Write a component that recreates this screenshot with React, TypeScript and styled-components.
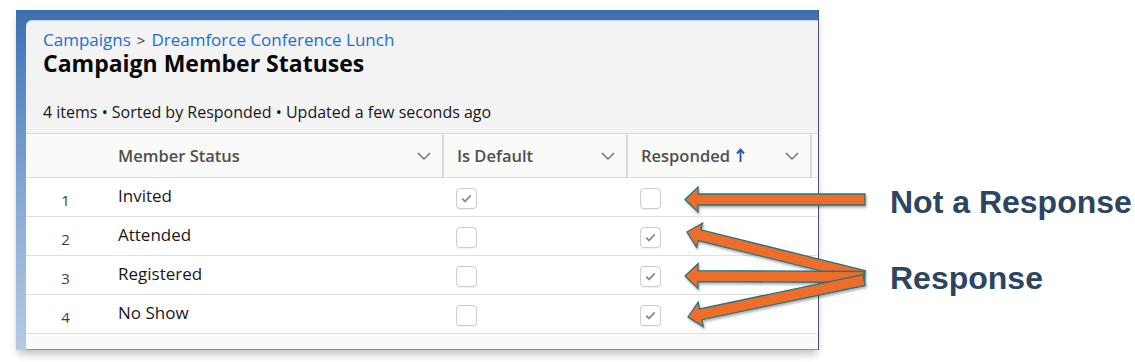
import React from 'react'
import styled, { createGlobalStyle } from 'styled-components'

const GlobalStyle = createGlobalStyle`
  body {
    margin: 0;
    background: #ffffff;
    font-family: "Open Sans", "Noto Sans", sans-serif;
  }
`

interface Row {
  num: number
  status: string
  isDefault: boolean
  responded: boolean
}

const rows: Row[] = [
  { num: 1, status: 'Invited', isDefault: true, responded: false },
  { num: 2, status: 'Attended', isDefault: false, responded: true },
  { num: 3, status: 'Registered', isDefault: false, responded: true },
  { num: 4, status: 'No Show', isDefault: false, responded: true },
]

type Pt = [number, number]

function arrowPoints(tail: Pt, tip: Pt, w = 5.5, h = 12.5, len = 13) {
  const dx = tip[0] - tail[0]
  const dy = tip[1] - tail[1]
  const d = Math.hypot(dx, dy)
  const ux = dx / d
  const uy = dy / d
  const nx = -uy
  const ny = ux
  const bx = tip[0] - ux * len
  const by = tip[1] - uy * len
  const pts: Pt[] = [
    [tail[0] + nx * w, tail[1] + ny * w],
    [bx + nx * w, by + ny * w],
    [bx + nx * h, by + ny * h],
    tip,
    [bx - nx * h, by - ny * h],
    [bx - nx * w, by - ny * w],
    [tail[0] - nx * w, tail[1] - ny * w],
  ]
  return pts.map((p) => p.map((v) => v.toFixed(1)).join(',')).join(' ')
}

const arrows: [Pt, Pt][] = [
  [[865, 199.5], [685, 199.5]],
  [[864, 276], [687, 232]],
  [[864, 277], [685, 276]],
  [[864, 280], [688, 317]],
]

function Chevron() {
  return (
    <svg width="14" height="8" viewBox="0 0 14 8">
      <path d="M1 1l6 6 6-6" fill="none" stroke="#706e6b" strokeWidth="1.4" />
    </svg>
  )
}

function SortArrow() {
  return (
    <svg width="9" height="15" viewBox="0 0 9 15">
      <path d="M4.5 14V2M1 5.5l3.5-4 3.5 4" fill="none" stroke="#2a5aa8" strokeWidth="1.9" />
    </svg>
  )
}

function Check() {
  return (
    <svg width="11" height="9" viewBox="0 0 11 9">
      <path d="M1.2 4.6l2.8 2.8 5.8-6" fill="none" stroke="#8c8b89" strokeWidth="1.8" />
    </svg>
  )
}

export default function App() {
  return (
    <>
      <GlobalStyle />
      <Page>
        <Frame>
          <Card>
            <PageHeader>
              <Breadcrumb>
                <Crumb>Campaigns</Crumb>
                <Sep>&gt;</Sep>
                <Crumb>Dreamforce Conference Lunch</Crumb>
              </Breadcrumb>
              <Title>Campaign Member Statuses</Title>
              <Meta>4 items • Sorted by Responded • Updated a few seconds ago</Meta>
            </PageHeader>
            <Table>
              <HeadRow>
                <HeadCell />
                <HeadCell divider>
                  <HeadLabel>Member Status</HeadLabel>
                  <Chevron />
                </HeadCell>
                <HeadCell divider>
                  <HeadLabel>Is Default</HeadLabel>
                  <Chevron />
                </HeadCell>
                <HeadCell divider>
                  <HeadLabel>
                    Responded <SortArrow />
                  </HeadLabel>
                  <Chevron />
                </HeadCell>
                <HeadCell />
              </HeadRow>
              {rows.map((r) => (
                <BodyRow key={r.num}>
                  <NumCell>{r.num}</NumCell>
                  <TextCell>{r.status}</TextCell>
                  <BoxCell>
                    <CheckBox>{r.isDefault && <Check />}</CheckBox>
                  </BoxCell>
                  <BoxCell>
                    <CheckBox>{r.responded && <Check />}</CheckBox>
                  </BoxCell>
                  <BoxCell />
                </BodyRow>
              ))}
              <FootRow />
            </Table>
          </Card>
        </Frame>
        <Notes>
          <Note top={174}>Not a Response</Note>
          <Note top={40}>Response</Note>
        </Notes>
        <Overlay width="1135" height="362" viewBox="0 0 1135 362">
          <defs>
            <filter id="shadow" x="-10%" y="-50%" width="120%" height="200%">
              <feDropShadow dx="1" dy="2" stdDeviation="1.2" floodColor="#000" floodOpacity="0.3" />
            </filter>
          </defs>
          {arrows.map(([tail, tip], i) => (
            <polygon
              key={i}
              points={arrowPoints(tail, tip)}
              fill="#ef6d2b"
              stroke="#23757e"
              strokeWidth="1.3"
              strokeLinejoin="miter"
              filter="url(#shadow)"
            />
          ))}
        </Overlay>
      </Page>
    </>
  )
}

const Page = styled.div`
  position: relative;
  display: flex;
  width: 1135px;
  height: 362px;
  padding: 10px 0 0 16px;
  box-sizing: border-box;
`

const Frame = styled.div`
  width: 803px;
  height: 340px;
  box-sizing: border-box;
  padding: 10px 0 0 10px;
  background: linear-gradient(180deg, #3d6fae 0px, #5383c0 60px, #8cacd6 200px, #b4cae6 340px);
  border-right: 1px solid #44546f;
  box-shadow: 0 6px 8px -2px rgba(0, 0, 0, 0.25);
  display: flex;
`

const Card = styled.div`
  flex: 1;
  background: #f3f3f3;
  border-top-left-radius: 6px;
  border-top: 1px solid #c9d6e6;
  border-bottom: 1px solid #8e939b;
  display: flex;
  flex-direction: column;
  overflow: hidden;
`

const PageHeader = styled.div`
  padding: 8px 17px 0;
  height: 112px;
  box-sizing: border-box;
`

const Breadcrumb = styled.div`
  display: flex;
  align-items: baseline;
  gap: 6px;
  font-size: 17px;
  line-height: 22px;
`

const Crumb = styled.span`
  color: #1b6fcf;
`

const Sep = styled.span`
  color: #3e3e3c;
  font-size: 15px;
`

const Title = styled.div`
  font-size: 23px;
  font-weight: 700;
  line-height: 24px;
  color: #080707;
`

const Meta = styled.div`
  margin-top: 27px;
  font-size: 16px;
  line-height: 20px;
  color: #181818;
`

const Table = styled.div`
  display: flex;
  flex-direction: column;
  flex: 1;
  border-top: 1px solid #dddbda;
`

const columns = '79px 339px 184px 184px 1fr'

const HeadRow = styled.div`
  display: grid;
  grid-template-columns: ${columns};
  height: 43px;
  background: #fafaf9;
  border-bottom: 1px solid #dddbda;
`

const HeadCell = styled.div<{ divider?: boolean }>`
  display: flex;
  align-items: center;
  justify-content: space-between;
  padding: 0 11px 0 13px;
  border-right: ${({ divider }) => (divider ? '2px solid #dddbda' : 'none')};
`

const HeadLabel = styled.span`
  display: flex;
  align-items: center;
  gap: 6px;
  font-size: 16.5px;
  font-weight: 600;
  color: #514f4d;
`

const BodyRow = styled.div`
  display: grid;
  grid-template-columns: ${columns};
  height: 38px;
  background: #ffffff;
  border-bottom: 1px solid #e2e0df;
`

const NumCell = styled.div`
  display: flex;
  align-items: center;
  justify-content: center;
  padding-top: 5px;
  font-size: 15px;
  color: #3e3e3c;
`

const TextCell = styled.div`
  display: flex;
  align-items: center;
  padding: 0 13px 3px;
  font-size: 17px;
  color: #181818;
`

const BoxCell = styled.div`
  display: flex;
  align-items: center;
  padding: 2px 12px 0;
`

const CheckBox = styled.div`
  width: 21px;
  height: 21px;
  box-sizing: border-box;
  border: 1px solid #cfcdcb;
  border-radius: 4px;
  background: #ffffff;
  box-shadow: 0 1px 1px rgba(0, 0, 0, 0.06);
  display: flex;
  align-items: center;
  justify-content: center;
`

const FootRow = styled.div`
  flex: 1;
  background: #fafaf9;
`

const Notes = styled.div`
  display: flex;
  flex-direction: column;
  margin-left: 71px;
`

const Note = styled.div<{ top: number }>`
  margin-top: ${({ top }) => top}px;
  font-family: "Liberation Sans", Arial, sans-serif;
  font-weight: 700;
  font-size: 32px;
  line-height: 36px;
  color: #2c4562;
  white-space: nowrap;
`

const Overlay = styled.svg`
  position: absolute;
  left: 0;
  top: 0;
  pointer-events: none;
`
